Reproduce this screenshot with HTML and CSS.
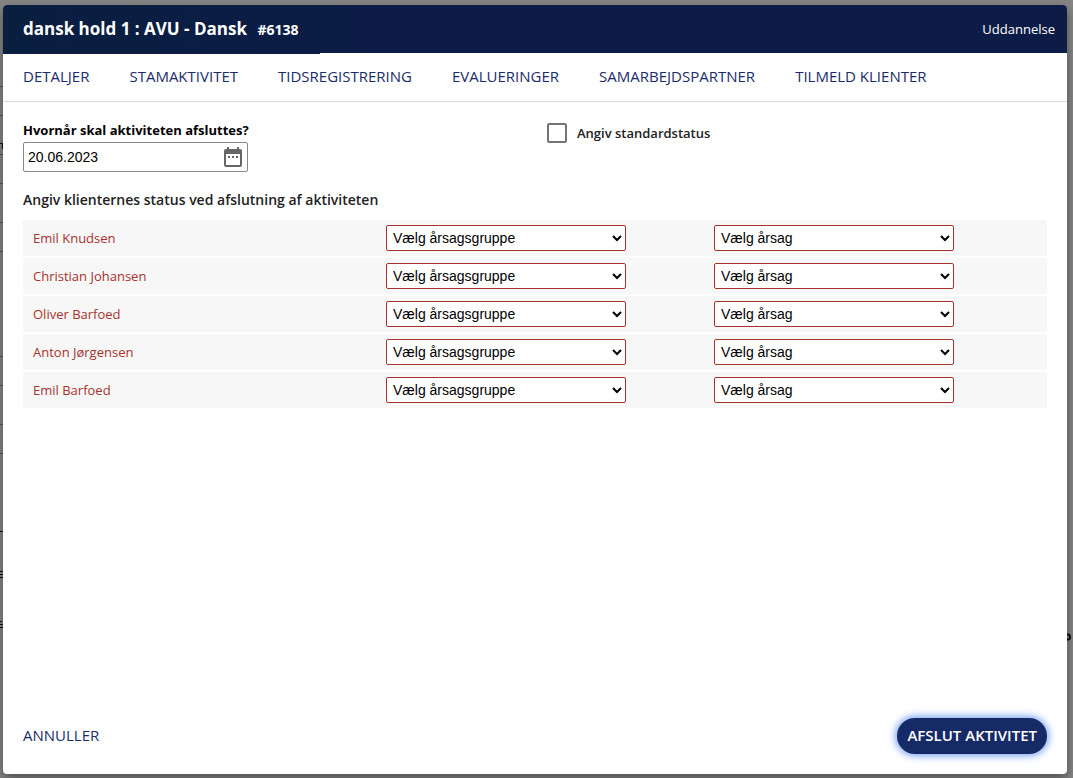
FILE: index.html
```html
<!DOCTYPE html>
<html lang="da">
<head>
<meta charset="utf-8">
<title>dansk hold 1 : AVU - Dansk</title>
<link rel="stylesheet" href="styles.css">
</head>
<body>
<svg class="page-behind" width="3" height="778" aria-hidden="true">
  <path d="M0 86.5h3M0 115.5h3M0 154.5h3M0 183.5h3M0 222.5h3M0 251.5h3M0 356.5h3M0 385.5h3M0 424.5h3M0 453.5h3" stroke="#555"/>
  <path d="M0 143.5h3M2.500 143v6M0 531.500h3M0 571.500h3M0 574.500h3M0 577.500h3M0 621.500h2M0 624.500h3M0 627.500h3" stroke="#111"/>
</svg>
<svg class="page-behind page-behind-right" width="6" height="778" aria-hidden="true">
  <path d="M0 634.500h1q2 0 2 2.500t-2 2.500h-1" fill="none" stroke="#111" stroke-width="2"/>
</svg>
<main class="dialog" role="dialog" aria-labelledby="title">
  <header class="header">
    <h1 class="title" id="title">dansk hold 1 : AVU - Dansk <span class="number">#6138</span></h1>
    <span class="category">Uddannelse</span>
  </header>
  <nav class="tabs">
    <a class="tab" href="#detaljer">DETALJER</a>
    <a class="tab" href="#stamaktivitet">STAMAKTIVITET</a>
    <a class="tab" href="#tidsregistrering">TIDSREGISTRERING</a>
    <a class="tab" href="#evalueringer">EVALUERINGER</a>
    <a class="tab" href="#samarbejdspartner">SAMARBEJDSPARTNER</a>
    <a class="tab" href="#tilmeld">TILMELD KLIENTER</a>
  </nav>
  <form class="form">
    <div class="settings">
      <div class="field">
        <label class="label" for="date">Hvornår skal aktiviteten afsluttes?</label>
        <div class="date-box">
          <input class="date" id="date" type="text" value="20.06.2023">
          <button class="calendar" type="button" aria-label="Vælg dato">
            <svg width="18" height="20" viewBox="0 0 18 20"><path fill="#666" fill-rule="evenodd" d="M3 0h2v2h8V0h2v2h1a2 2 0 0 1 2 2v14a2 2 0 0 1-2 2H2a2 2 0 0 1-2-2V4a2 2 0 0 1 2-2h1zM2 7v11h14V7zM4 9h2v2H4zM8 9h2v2H8zM12 9h2v2h-2z"/></svg>
          </button>
        </div>
      </div>
      <label class="standard"><input class="check" type="checkbox">Angiv standardstatus</label>
    </div>
    <h2 class="subtitle">Angiv klienternes status ved afslutning af aktiviteten</h2>
    <ul class="clients">
      <li class="client"><span>Emil Knudsen</span><select class="select" aria-label="Årsagsgruppe for Emil Knudsen"><option>Vælg årsagsgruppe</option></select><select class="select" aria-label="Årsag for Emil Knudsen"><option>Vælg årsag</option></select></li>
      <li class="client"><span>Christian Johansen</span><select class="select" aria-label="Årsagsgruppe for Christian Johansen"><option>Vælg årsagsgruppe</option></select><select class="select" aria-label="Årsag for Christian Johansen"><option>Vælg årsag</option></select></li>
      <li class="client"><span>Oliver Barfoed</span><select class="select" aria-label="Årsagsgruppe for Oliver Barfoed"><option>Vælg årsagsgruppe</option></select><select class="select" aria-label="Årsag for Oliver Barfoed"><option>Vælg årsag</option></select></li>
      <li class="client"><span>Anton Jørgensen</span><select class="select" aria-label="Årsagsgruppe for Anton Jørgensen"><option>Vælg årsagsgruppe</option></select><select class="select" aria-label="Årsag for Anton Jørgensen"><option>Vælg årsag</option></select></li>
      <li class="client"><span>Emil Barfoed</span><select class="select" aria-label="Årsagsgruppe for Emil Barfoed"><option>Vælg årsagsgruppe</option></select><select class="select" aria-label="Årsag for Emil Barfoed"><option>Vælg årsag</option></select></li>
    </ul>
    <footer class="actions">
      <button class="cancel" type="button">ANNULLER</button>
      <button class="submit" type="button">AFSLUT AKTIVITET</button>
    </footer>
  </form>
</main>
</body>
</html>
```
FILE: styles.css
```css
* { box-sizing: border-box; }
body {
  margin: 0;
  min-height: 100vh;
  padding: 5px 6px 4px 3px;
  display: flex;
  background: #858585;
  color: #222;
  font: 14px/20px "Trebuchet MS", "Open Sans", "Noto Sans", sans-serif;
  position: relative;
}
.page-behind { position: absolute; left: 0; top: 0; }
.page-behind-right { left: auto; right: 0; }
.dialog {
  position: relative;
  flex: 1;
  display: flex;
  flex-direction: column;
  background: #fff;
  border-radius: 4px;
  box-shadow: 0 5px 12px rgba(0, 0, 0, .4);
}
.header {
  height: 48px;
  padding: 0 12px 0 20px;
  display: flex;
  align-items: center;
  justify-content: space-between;
  background: linear-gradient(90deg, #091f40, #0c1c46 35%);
  border-radius: 4px 4px 0 0;
  color: #fff;
}
.title { margin: 0; font-size: 17px; font-weight: 700; }
.number { margin-left: 6px; font-size: 14px; }
.category { font-size: 13px; font-weight: 500; }
.tabs {
  height: 49px;
  padding: 0 20px 2px;
  display: flex;
  align-items: center;
  gap: 40px;
  border-bottom: 1px solid #ddd;
  background: linear-gradient(#0c1c46, #0c1c46) 0 0 / 317px 1px no-repeat;
}
.tab { color: #1b2b6b; font-size: 15px; text-decoration: none; }
.form { flex: 1; padding: 18px 20px 20px; display: flex; flex-direction: column; }
.settings { display: grid; grid-template-columns: 1fr 1fr; column-gap: 24px; align-items: start; }
.label { display: block; margin-bottom: 2px; color: #000; font-size: 13px; font-weight: 700; }
.date-box { width: 225px; height: 30px; display: flex; align-items: center; border: 1px solid #888; border-radius: 2px; }
.date { flex: 1; min-width: 0; border: 0; padding: 0 4px; background: none; color: #000; font: 14px "Liberation Sans", Arial, sans-serif; }
.calendar { display: flex; padding: 0 5px; border: 0; background: none; }
.standard { display: flex; align-items: center; gap: 10px; padding-top: 3px; font-size: 13px; font-weight: 600; }
.check { appearance: none; width: 20px; height: 20px; margin: 0; border: 2px solid #757575; border-radius: 2px; }
.subtitle { margin: 18px 0 10px; font-size: 14px; line-height: 20px; font-weight: 600; }
.clients { margin: 0; padding: 0; list-style: none; display: grid; gap: 2px; }
.client {
  height: 36px;
  padding-left: 10px;
  display: grid;
  grid-template-columns: 353fr 328fr 333fr;
  align-items: center;
  background: #f7f7f7;
  color: #a8322d;
  font-size: 13px;
}
.select {
  width: 240px;
  height: 26px;
  padding: 0 3px 0 2px;
  border: 1px solid #a8322d;
  border-radius: 2px;
  background: #fff;
  color: #000;
  font: 14px "Liberation Sans", Arial, sans-serif;
}
.actions { margin-top: auto; display: flex; align-items: center; justify-content: space-between; }
.cancel { padding: 0 0 2px; border: 0; background: none; color: #1b2b6b; font: inherit; font-size: 15px; }
.submit {
  height: 36px;
  padding: 0 10px 2px;
  border: 0;
  border-radius: 18px;
  background: #152a66;
  box-shadow: 0 0 8px 1px #5b8def;
  color: #fff;
  font: inherit;
  font-size: 15px;
  font-weight: 600;
}
```
